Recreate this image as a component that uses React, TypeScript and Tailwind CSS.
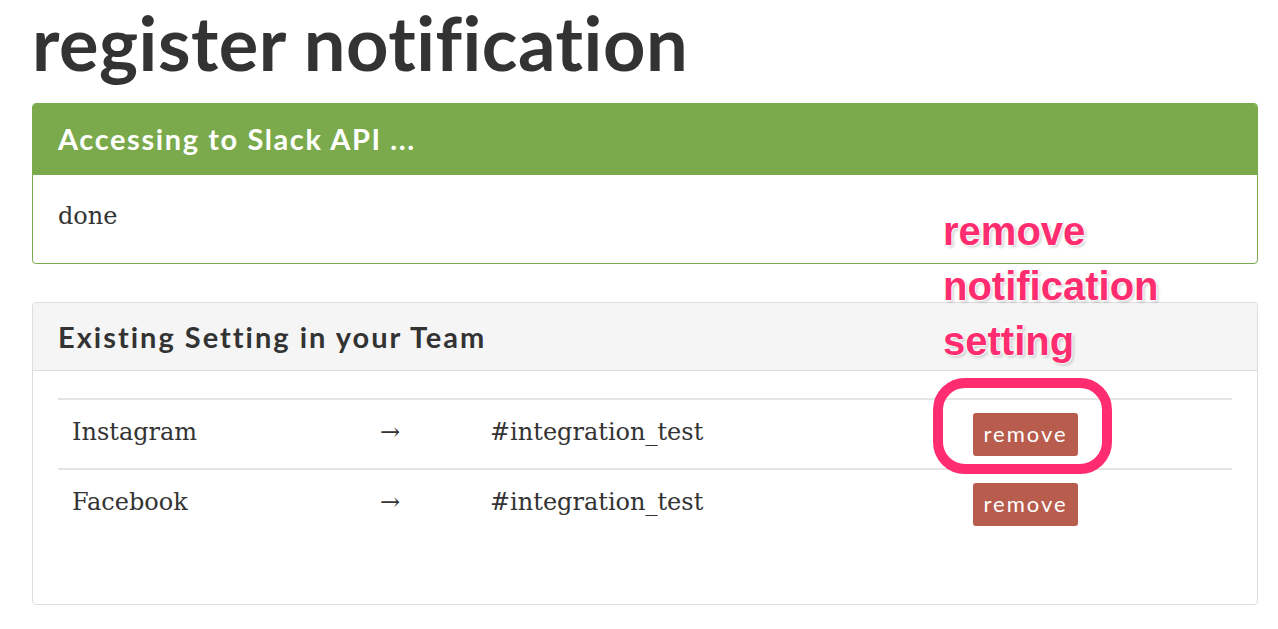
export default function App() {
	const rows = [
		{ from: "Instagram", to: "#integration_test" },
		{ from: "Facebook", to: "#integration_test" },
	];
	const heading = { fontFamily: "Lato, 'Open Sans', sans-serif" };
	const serif = { fontFamily: "'DejaVu Serif', 'Liberation Serif', serif" };

	return (
		<div className="relative min-h-screen bg-white text-[#333]">
			<div className="pl-[32px] pr-[20px]">
				<h1
					className="text-[74px] font-bold leading-[89px] tracking-[0.5px] text-[#333] -mt-[2px]"
					style={heading}
				>
					register notification
				</h1>

				<div className="mt-[16px] rounded-[4px] border border-[#7aaa4b] overflow-hidden">
					<div
						className="bg-[#7aaa4b] h-[70px] px-[25px] flex items-center text-white text-[29px] font-bold tracking-[1.6px]"
						style={heading}
					>
						Accessing to Slack API ...
					</div>
					<div className="border-t border-[#7aaa4b] h-[89px] px-[25px] pt-[23px] text-[24px] text-[#333]" style={serif}>
						done
					</div>
				</div>

				<div className="mt-[38px] rounded-[4px] border border-[#ddd] overflow-hidden h-[303px]">
					<div
						className="bg-[#f5f5f5] border-b border-[#ddd] h-[68px] px-[25px] flex items-center text-[29px] font-bold tracking-[2px] text-[#333]"
						style={heading}
					>
						Existing Setting in your Team
					</div>
					<div className="px-[25px] pt-[27px]">
						{rows.map((r) => (
							<div
								key={r.from}
								className="grid grid-cols-[308px_110px_483px_1fr] items-center h-[70px] border-t-2 border-[#e5e5e5] text-[24px] leading-[32px] text-[#333]"
								style={serif}
							>
								<div className="pl-[14px] pb-[4px]">{r.from}</div>
								<div className="pl-[14px] pb-[4px]">→</div>
								<div className="pl-[14px] pb-[4px]">{r.to}</div>
								<div className="pl-[14px]">
									<button
										className="bg-[#b85c4e] text-white rounded-[3px] w-[105px] h-[43px] text-[22px] tracking-[2px]"
										style={heading}
									>
										remove
									</button>
								</div>
							</div>
						))}
					</div>
				</div>
			</div>

			{/* annotation overlay */}
			<div
				className="absolute left-[943px] top-[206px] text-[#ff2d6f] text-[40px] font-bold leading-[55px]"
				style={{
					fontFamily: "'Liberation Sans', Arial, sans-serif",
					textShadow: "0 0 2px #fff, 1px 1px 2px #fff, -1px -1px 2px #fff, 2px 2px 3px rgba(0,0,0,0.25)",
				}}
			>
				remove
				<br />
				notification
				<br />
				setting
			</div>
			<div className="absolute left-[933px] top-[380px] w-[179px] h-[96px] rounded-[32px] border-[10px] border-[#ff2d6f]" />
		</div>
	);
}
